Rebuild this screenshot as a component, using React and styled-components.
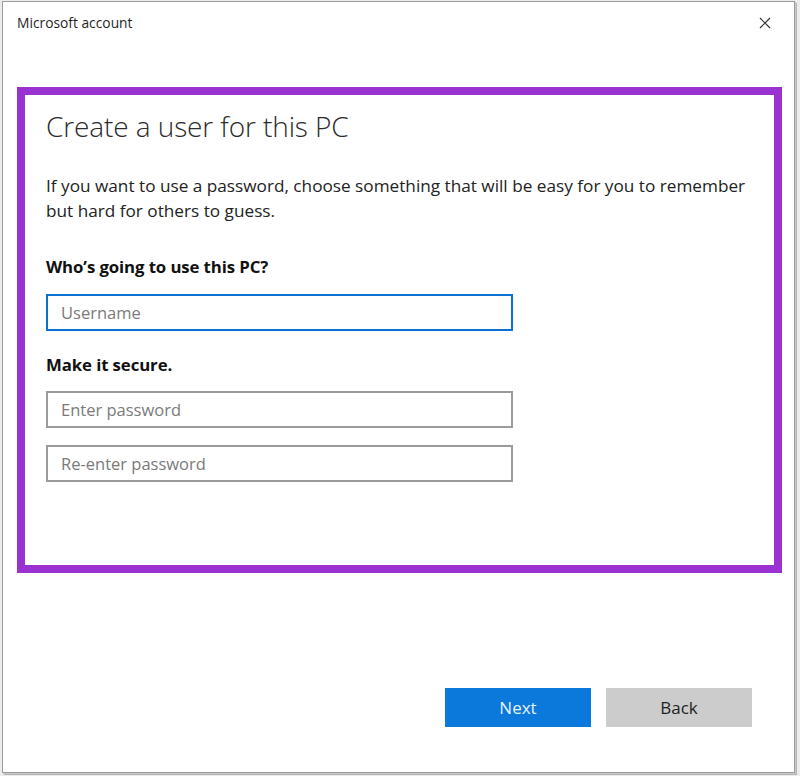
import React from 'react';
import styled, { createGlobalStyle } from 'styled-components';

const GlobalStyle = createGlobalStyle`
  html, body {
    margin: 0;
    padding: 0;
    background: #ececec;
  }
  body {
    font-family: "Open Sans", "Noto Sans", "Liberation Sans", sans-serif;
  }
`;

const Page = styled.div`
  width: 800px;
  height: 776px;
  padding: 1px 5px 3px 2px;
  box-sizing: border-box;
`;

const Window = styled.div`
  display: flex;
  flex-direction: column;
  height: 100%;
  background: #fff;
  border: 1px solid #9c9c9c;
  box-shadow: 1px 1px 0 #c8c8c8, 2px 2px 0 #b4b4b4;
  box-sizing: border-box;
`;

const TitleBar = styled.div`
  display: flex;
  align-items: center;
  justify-content: space-between;
  height: 42px;
  padding: 0 22px 0 14px;
  margin-bottom: 43px;
`;

const Caption = styled.span`
  font-size: 13.8px;
  color: #1f1f1f;
  margin-top: -2px;
`;

const Close = styled.button`
  border: 0;
  background: none;
  padding: 0;
  width: 14px;
  height: 14px;
  display: flex;
  align-items: center;
  justify-content: center;
`;

const Frame = styled.div`
  margin: 0 12px 0 14px;
  height: 486px;
  border: 8px solid #9a32d1;
  box-sizing: border-box;
  padding: 13px 21px 0;
`;

const Heading = styled.h1`
  margin: 0;
  font-size: 28px;
  font-weight: 300;
  color: #2b2b2b;
  line-height: 36px;
  letter-spacing: -0.1px;
`;

const Intro = styled.p`
  margin: 29px 0 0;
  max-width: 708px;
  font-size: 17.2px;
  line-height: 25px;
  color: #222;
`;

const Label = styled.h2`
  margin: ${p => p.$top}px 0 0;
  font-size: 16.8px;
  font-weight: 700;
  color: #111;
  line-height: 22px;
  letter-spacing: -0.1px;
`;

const Field = styled.input`
  display: block;
  width: 467px;
  height: 37px;
  margin-top: ${p => p.$top}px;
  box-sizing: border-box;
  border: 2px solid ${p => (p.$focused ? '#0a72d0' : '#9b9b9b')};
  padding: 0 13px;
  font-family: inherit;
  font-size: 16.5px;
  color: #222;
  outline: none;

  &::placeholder {
    color: #7a7a7a;
  }
`;

const Footer = styled.div`
  flex: 1;
  display: flex;
  align-items: flex-end;
  justify-content: flex-end;
  gap: 15px;
  padding: 0 42px 45px 0;
`;

const Button = styled.button`
  width: 146px;
  height: 39px;
  border: 0;
  font-family: inherit;
  font-size: 17px;
  background: ${p => (p.$primary ? '#0b78dc' : '#cccccc')};
  color: ${p => (p.$primary ? '#e8f2fc' : '#222')};
`;

const App = () => (
  <Page>
    <GlobalStyle />
    <Window>
      <TitleBar>
        <Caption>Microsoft account</Caption>
        <Close aria-label="Close">
          <svg width="12" height="12" viewBox="0 0 12 12">
            <path d="M1 1 L11 11 M11 1 L1 11" stroke="#333" strokeWidth="1.2" />
          </svg>
        </Close>
      </TitleBar>
      <Frame>
        <Heading>Create a user for this PC</Heading>
        <Intro>
          If you want to use a password, choose something that will be easy for you to remember
          but hard for others to guess.
        </Intro>
        <Label $top={33}>Who’s going to use this PC?</Label>
        <Field $top={16} $focused placeholder="Username" />
        <Label $top={23}>Make it secure.</Label>
        <Field $top={15} type="password" placeholder="Enter password" />
        <Field $top={17} type="password" placeholder="Re-enter password" />
      </Frame>
      <Footer>
        <Button $primary>Next</Button>
        <Button>Back</Button>
      </Footer>
    </Window>
  </Page>
);

export default App;
